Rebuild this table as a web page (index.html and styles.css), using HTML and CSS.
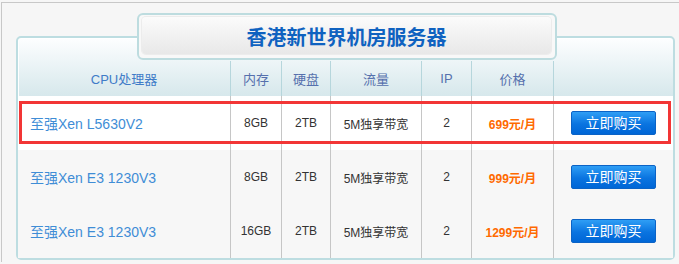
FILE: index.html
```html
<!DOCTYPE html>
<html lang="zh-CN">
<head>
  <meta charset="UTF-8" />
  <meta name="viewport" content="width=device-width, initial-scale=1.0"/>
  <title>香港新世界机房服务器</title>
  <link rel="stylesheet" href="styles.css">
</head>
<body>
  <div class="page">
    <div class="tab">
      <div class="tab-inner">香港新世界机房服务器</div>
    </div>

    <div class="panel">
      <div class="row head">
        <div class="cell">CPU处理器</div>
        <div class="cell">内存</div>
        <div class="cell">硬盘</div>
        <div class="cell">流量</div>
        <div class="cell">IP</div>
        <div class="cell">价格</div>
        <div class="cell"></div>
      </div>

      <div class="row hot">
        <div class="cell cpu">至强Xen L5630V2</div>
        <div class="cell">8GB</div>
        <div class="cell">2TB</div>
        <div class="cell">5M独享带宽</div>
        <div class="cell">2</div>
        <div class="cell price">699元/月</div>
        <div class="cell"><a class="buy" href="#">立即购买</a></div>
      </div>

      <div class="row alt">
        <div class="cell cpu">至强Xen E3 1230V3</div>
        <div class="cell">8GB</div>
        <div class="cell">2TB</div>
        <div class="cell">5M独享带宽</div>
        <div class="cell">2</div>
        <div class="cell price">999元/月</div>
        <div class="cell"><a class="buy" href="#">立即购买</a></div>
      </div>

      <div class="row alt">
        <div class="cell cpu">至强Xen E3 1230V3</div>
        <div class="cell">16GB</div>
        <div class="cell">2TB</div>
        <div class="cell">5M独享带宽</div>
        <div class="cell">2</div>
        <div class="cell price">1299元/月</div>
        <div class="cell"><a class="buy" href="#">立即购买</a></div>
      </div>
    </div>
  </div>
</body>
</html>
```

FILE: styles.css
```css
body {
  margin: 0;
  background-color: #f6f6f6;
  font-family: 'Liberation Sans', Arial, 'Noto Sans CJK SC', sans-serif;
  font-size: 12px;
  color: #333;
}
.page {
  margin: 2px 0 0 1px;
  border-top: 1px solid #c8c8c8;
  border-left: 1px solid #c8c8c8;
  padding: 10px 0 0 14px;
  height: 260px;
  box-sizing: border-box;
}
.tab {
  position: relative;
  z-index: 2;
  width: 420px;
  height: 47px;
  margin-left: 121px;
  box-sizing: border-box;
  border: 2px solid #bddcdf;
  border-radius: 6px;
  padding: 2px 4px 4px 3px;
  background-color: #f8f8f8;
}
.tab-inner {
  height: 100%;
  border-radius: 4px;
  background: linear-gradient(#fbfbfb, #e8e8e8);
  box-shadow: 0 0 0 1px #ececec;
  text-align: center;
  line-height: 40px;
  font-family: 'Noto Sans CJK SC', sans-serif;
  font-size: 20px;
  font-weight: bold;
  color: #0f62c0;
}
.panel {
  margin-top: -24px;
  width: 659px;
  box-sizing: border-box;
  border: 2px solid #bddde1;
  border-radius: 5px;
  padding-top: 23px;
  background: linear-gradient(#fdfeff 0, #d5e7eb 60px, #f7f7f7 60px);
  box-shadow: inset 0 1px 0 #fff, inset 1px 0 0 #fff;
}
.row {
  display: grid;
  grid-template-columns: 213px 51px 49px 91px 50px 82px 119px;
  height: 54px;
}
.row.head {
  height: 35px;
}
.cell {
  display: flex;
  align-items: center;
  justify-content: center;
  border-right: 1px solid #c6c6c6;
}
.cell:last-child {
  border-right: none;
}
.head .cell {
  border-right-color: #b6d6dc;
  font-size: 13px;
  color: #5670ad;
}
.head .cell:first-child {
  color: #3f7cc8;
}
.hot {
  position: relative;
  background-color: #fff;
}
.hot::after {
  content: '';
  position: absolute;
  top: 5px;
  left: 1px;
  right: 2px;
  bottom: 6px;
  border: 3px solid #f23535;
  pointer-events: none;
}
.alt {
  background-color: #f7f7f7;
}
.cpu {
  justify-content: flex-start;
  padding-left: 12px;
  font-size: 14px;
  color: #3f8dd6;
}
.price {
  font-weight: bold;
  color: #ff6a00;
}
.buy {
  display: block;
  width: 85px;
  height: 24px;
  box-sizing: border-box;
  border: 1px solid #0b63c6;
  border-radius: 2px;
  background: linear-gradient(#2f9ef5, #0a74e0 55%, #0066d6);
  color: #fff;
  font-size: 14px;
  line-height: 22px;
  text-align: center;
  text-decoration: none;
}
```
